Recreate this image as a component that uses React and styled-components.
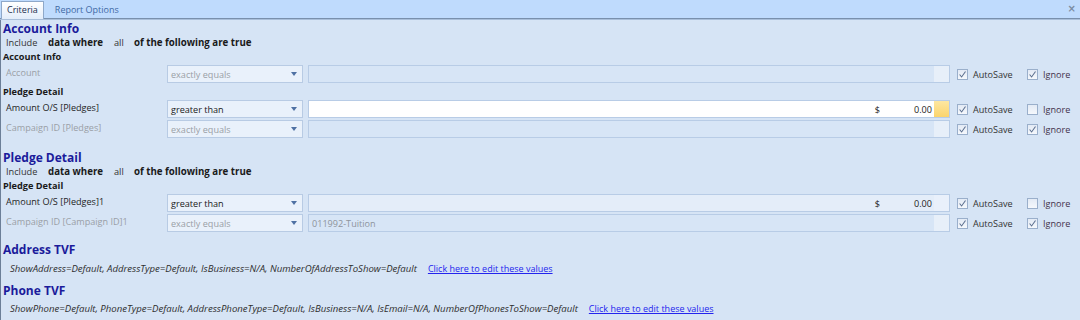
import React from 'react';
import styled, { createGlobalStyle } from 'styled-components';

const Global = createGlobalStyle`
  html, body { margin: 0; padding: 0; background: #d6e4f5; }
  body { font-family: "Open Sans", "Noto Sans", sans-serif; }
  * { box-sizing: border-box; }
`;

const Frame = styled.div`
  width: 1080px;
  height: 320px;
  overflow: hidden;
  background: #d6e4f5;
  display: flex;
  flex-direction: column;
`;

const TabStrip = styled.div`
  height: 19px;
  flex: none;
  background: #bfdbfd;
  border-bottom: 1px solid #7990ad;
  box-shadow: 0 1px 0 #a9bfda;
  display: flex;
  align-items: flex-end;
  padding-left: 1px;
  position: relative;
  z-index: 1;
`;

const Tab = styled.div`
  height: ${p => (p.$active ? 18 : 17)}px;
  padding: 0 ${p => (p.$active ? 5 : 10)}px;
  font-size: 9px;
  line-height: 16px;
  color: ${p => (p.$active ? '#1b2f4f' : '#3f6aa5')};
  margin-bottom: ${p => (p.$active ? -1 : 0)}px;
  background: ${p => (p.$active ? 'linear-gradient(#ffffff, #e3edfa)' : 'transparent')};
  border: ${p => (p.$active ? '1px solid #8ea8c9' : '1px solid transparent')};
  border-bottom: none;
`;

const Close = styled.div`
  margin-left: auto;
  align-self: center;
  margin-right: 4px;
  font-size: 10px;
  font-weight: 700;
  color: #7b8ca2;
  line-height: 10px;
  font-family: "DejaVu Sans", sans-serif;
`;

const Content = styled.div`
  flex: 1;
  display: flex;
  flex-direction: column;
  border-left: 1px solid #6c7f98;
  padding-top: 3px;
`;

const SectionTitle = styled.div`
  height: 14px;
  line-height: 14px;
  margin-top: ${p => p.$mt || 0}px;
  padding-left: 2px;
  font-size: 12px;
  font-weight: 700;
  color: #1b1b9b;
`;

const IncludeLine = styled.div`
  height: 12px;
  display: flex;
  align-items: center;
  padding-left: 5px;
  font-size: 9px;
  color: #1e1e1e;
`;

const Word = styled.span`
  display: inline-block;
  width: ${p => (p.$w ? `${p.$w}px` : 'auto')};
  font-weight: ${p => (p.$bold ? 700 : 400)};
  font-size: ${p => (p.$bold ? 9.7 : 9.2)}px;
  color: ${p => (p.$bold ? '#1a1a1a' : '#333')};
  white-space: nowrap;
`;

const SubHeader = styled.div`
  height: 14px;
  line-height: 14px;
  margin-top: 2px;
  padding-left: 2px;
  font-size: 9.2px;
  font-weight: 700;
  color: #1a1a1a;
`;

const Row = styled.div`
  height: 18px;
  margin-top: ${p => p.$gap}px;
  display: flex;
  padding-left: 5px;
`;

const Label = styled.div`
  width: 161px;
  flex: none;
  font-size: 9.1px;
  line-height: 16px;
  color: ${p => (p.$off ? '#9a9fa6' : '#1e1e1e')};
  white-space: nowrap;
`;

const Select = styled.div`
  width: 136px;
  flex: none;
  border: 1px solid #b8cbe4;
  background: #e9f1fb;
  display: flex;
  align-items: center;
  padding-left: 3px;
  font-size: 9.1px;
  color: ${p => (p.$off ? '#9a9fa6' : '#1a1a1a')};
`;

const Arrow = styled.span`
  margin-left: auto;
  margin-right: 5px;
  width: 0;
  height: 0;
  border-left: 3.5px solid transparent;
  border-right: 3.5px solid transparent;
  border-top: 4px solid #4f71a3;
`;

const fieldBg = { white: '#ffffff', light: '#e4edf9', off: '#d7e5f6' };
const endBg = { white: 'linear-gradient(#fde7a2, #fbd46c)', light: '#e9f0fb', off: '#e7eff9' };

const Field = styled.div`
  margin-left: 5px;
  flex: 1;
  display: flex;
  border: 1px solid #b8cce6;
  background: ${p => fieldBg[p.$kind]};
`;

const FieldText = styled.div`
  flex: 1;
  display: flex;
  align-items: center;
  padding: 0 2px 0 3px;
  font-size: 9.1px;
  color: ${p => (p.$off ? '#8e949c' : '#1e1e1e')};
`;

const Dollar = styled.span`
  margin-left: auto;
  margin-right: 34px;
`;

const EndBox = styled.div`
  width: 15px;
  flex: none;
  background: ${p => endBg[p.$kind]};
`;

const Checks = styled.div`
  width: 130px;
  flex: none;
  padding-left: 7px;
  display: flex;
  align-items: center;
`;

const CheckItem = styled.div`
  width: ${p => p.$w}px;
  display: flex;
  align-items: center;
  gap: 5px;
  font-size: 9.1px;
  color: ${p => p.$color};
`;

const Box = styled.span`
  width: 11px;
  height: 11px;
  flex: none;
  border: 1px solid #9aafcb;
  background: linear-gradient(#e3eaf5, #f5f8fc);
  display: flex;
  align-items: center;
  justify-content: center;
`;

const InfoLine = styled.div`
  height: 14px;
  margin-top: ${p => p.$mt}px;
  padding-left: 9px;
  display: flex;
  align-items: center;
  font-size: 9.6px;
  font-style: italic;
  color: #2e2e2e;
  white-space: nowrap;
`;

const Link = styled.a`
  margin-left: 11px;
  font-size: 9px;
  font-style: normal;
  color: #2424ee;
  text-decoration: underline;
  cursor: pointer;
`;

const Check = ({ on }) => (
  <Box>
    {on && (
      <svg width="9" height="9" viewBox="0 0 9 9">
        <path d="M1.6 4.5 L3.6 7 L7.5 1.5" fill="none" stroke="#5b6e8e" strokeWidth="1.05" />
      </svg>
    )}
  </Box>
);

const CriteriaRow = ({ gap, label, off, op, kind, text, money, ignore }) => (
  <Row $gap={gap}>
    <Label $off={off}>{label}</Label>
    <Select $off={off}>
      {op}
      <Arrow />
    </Select>
    <Field $kind={kind}>
      <FieldText $off={off}>
        {text}
        {money && (
          <>
            <Dollar>$</Dollar>
            <span>0.00</span>
          </>
        )}
      </FieldText>
      <EndBox $kind={kind} />
    </Field>
    <Checks>
      <CheckItem $w={70} $color="#333">
        <Check on />
        AutoSave
      </CheckItem>
      <CheckItem $w={50} $color="#43324c">
        <Check on={ignore} />
        Ignore
      </CheckItem>
    </Checks>
  </Row>
);

const Include = () => (
  <IncludeLine>
    <Word $w={42}>Include</Word>
    <Word $w={66} $bold>data where</Word>
    <Word $w={20}>all</Word>
    <Word $bold>of the following are true</Word>
  </IncludeLine>
);

export default function App() {
  return (
    <>
      <Global />
      <Frame>
        <TabStrip>
          <Tab $active>Criteria</Tab>
          <Tab>Report Options</Tab>
          <Close>×</Close>
        </TabStrip>
        <Content>
          <SectionTitle>Account Info</SectionTitle>
          <Include />
          <SubHeader>Account Info</SubHeader>
          <CriteriaRow gap={1} label="Account" off op="exactly equals" kind="off" ignore />
          <SubHeader>Pledge Detail</SubHeader>
          <CriteriaRow gap={1} label="Amount O/S [Pledges]" op="greater than" kind="white" money />
          <CriteriaRow gap={2} label="Campaign ID [Pledges]" off op="exactly equals" kind="off" ignore />

          <SectionTitle $mt={13}>Pledge Detail</SectionTitle>
          <Include />
          <SubHeader>Pledge Detail</SubHeader>
          <CriteriaRow gap={1} label="Amount O/S [Pledges]1" op="greater than" kind="light" money />
          <CriteriaRow gap={2} label="Campaign ID [Campaign ID]1" off op="exactly equals" kind="off" text="011992-Tuition" ignore />

          <SectionTitle $mt={11}>Address TVF</SectionTitle>
          <InfoLine $mt={4}>
            ShowAddress=Default, AddressType=Default, IsBusiness=N/A, NumberOfAddressToShow=Default
            <Link>Click here to edit these values</Link>
          </InfoLine>
          <SectionTitle $mt={9}>Phone TVF</SectionTitle>
          <InfoLine $mt={3}>
            ShowPhone=Default, PhoneType=Default, AddressPhoneType=Default, IsBusiness=N/A, IsEmail=N/A, NumberOfPhonesToShow=Default
            <Link>Click here to edit these values</Link>
          </InfoLine>
        </Content>
      </Frame>
    </>
  );
}
